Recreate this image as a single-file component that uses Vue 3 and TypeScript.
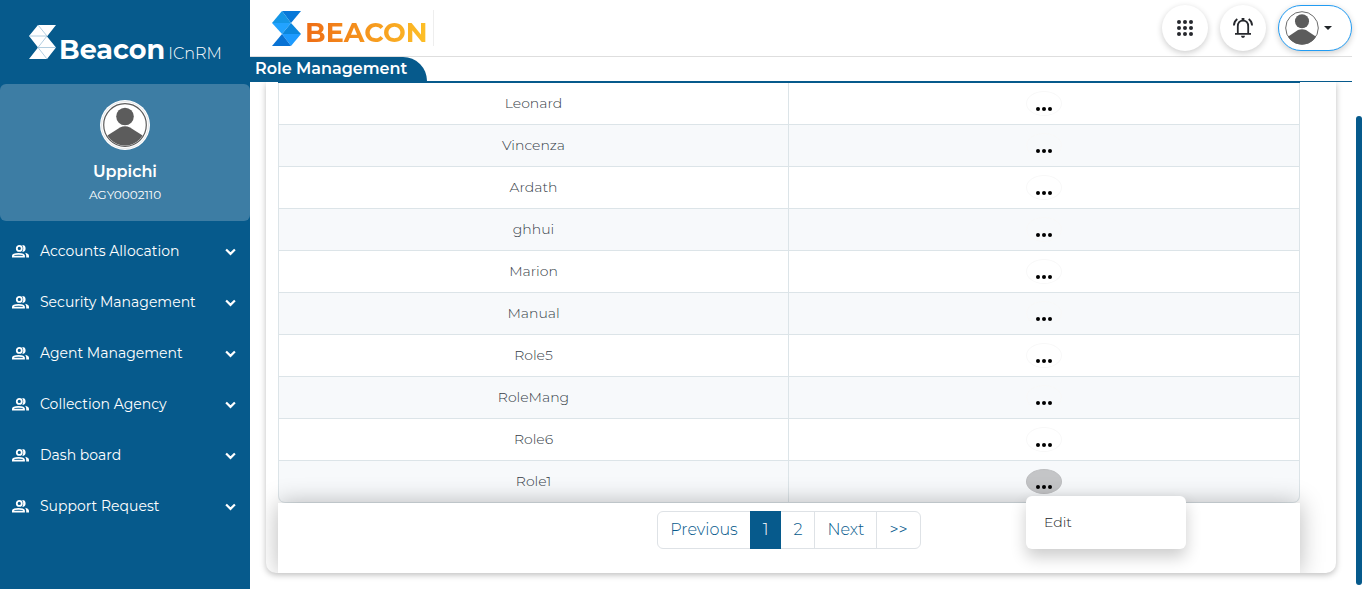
<script setup lang="ts">
import { ref } from 'vue'

const menuItems: string[] = [
  'Accounts Allocation',
  'Security Management',
  'Agent Management',
  'Collection Agency',
  'Dash board',
  'Support Request',
]

const roles: string[] = [
  'Leonard',
  'Vincenza',
  'Ardath',
  'ghhui',
  'Marion',
  'Manual',
  'Role5',
  'RoleMang',
  'Role6',
  'Role1',
]

const pages: string[] = ['Previous', '1', '2', 'Next', '>>']
const currentPage = ref('1')
const openRole = ref<string | null>('Role1')

function toggle(role: string): void {
  openRole.value = openRole.value === role ? null : role
}

function goTo(page: string): void {
  if (page === '1' || page === '2') currentPage.value = page
  else currentPage.value = page === 'Previous' ? '1' : '2'
}
</script>

<template>
  <div class="shell">
    <aside class="sidebar">
      <div class="brand">
        <svg class="brand-mark" viewBox="0 0 27 34" aria-hidden="true">
          <path d="M9 0H27L18 11.500L27 22.500L18 34H0L9 22.500L0 11Z" fill="#fff" />
          <path d="M0 11H18L9 0M18 11L9 22.500H27M9 22.500L18 34" fill="none" stroke="#9fc2d8" stroke-width=".8" />
        </svg>
        <span class="brand-name">Beacon</span>
        <span class="brand-suffix">ICnRM</span>
      </div>

      <section class="profile">
        <svg class="profile-photo" viewBox="0 0 50 50" aria-hidden="true">
          <defs>
            <clipPath id="profile-clip"><circle cx="25" cy="25" r="20.500" /></clipPath>
          </defs>
          <circle cx="25" cy="25" r="25" fill="#fff" />
          <circle cx="25" cy="25" r="23.500" fill="none" stroke="#d9dde0" stroke-width=".7" />
          <circle cx="25" cy="25" r="21.300" fill="#fff" stroke="#5c5c5c" stroke-width="1.200" />
          <g clip-path="url(#profile-clip)" fill="#5c5c5c">
            <circle cx="25" cy="16.500" r="8.800" />
            <path d="M5 37L20 27.500Q25 25 30 27.500L45 37V50H5Z" />
          </g>
        </svg>
        <strong class="profile-name">Uppichi</strong>
        <span class="profile-code">AGY0002110</span>
      </section>

      <nav class="menu" aria-label="Main">
        <button v-for="item in menuItems" :key="item" class="menu-item" type="button">
          <svg class="people" viewBox="0 0 17 13" aria-hidden="true">
            <circle cx="7.300" cy="3.400" r="2.500" fill="none" stroke="#fff" stroke-width="1.800" />
            <path d="M.9 11.600V10.800Q1 8.800 6.500 8.800T12 10.800V11.600Z" fill="none" stroke="#fff" stroke-width="1.800" />
            <path d="M10.200 0A3.400 3.400 0 1 1 10.200 6.800Q12.300 3.500 10.200 0ZM13 7.800Q17 8.600 17 11V12.500H14.200V10.800Q14.200 9 13 7.800Z" fill="#fff" />
          </svg>
          <span class="menu-label">{{ item }}</span>
          <svg class="chevron" viewBox="0 0 10 7" aria-hidden="true">
            <path d="M1 1.200L5 5.200L9 1.200" fill="none" stroke="#fff" stroke-width="2" />
          </svg>
        </button>
      </nav>
    </aside>

    <main class="main">
      <header class="topbar">
        <div class="logo">
          <svg class="logo-mark" viewBox="0 0 29 35" aria-hidden="true">
            <path d="M10 0H29L19 12Z" fill="#0878d8" />
            <path d="M10 0L19 12H0Z" fill="#1496e6" />
            <path d="M0 12H19L10 23Z" fill="#22a3ff" />
            <path d="M19 12L29 23H10Z" fill="#0b87dd" />
            <path d="M10 23H29L19 35Z" fill="#1d9bff" />
            <path d="M10 23L19 35H0Z" fill="#0872d4" />
          </svg>
          <span class="logo-name">BEACON</span>
        </div>
        <div class="actions">
          <button class="round" type="button" aria-label="Applications">
            <svg class="apps" viewBox="0 0 16 16" aria-hidden="true">
              <g fill="#26282d">
                <template v-for="r in 3" :key="r">
                  <circle v-for="c in 3" :key="c" :cx="c * 6 - 4" :cy="r * 6 - 4" r="2" />
                </template>
              </g>
            </svg>
          </button>
          <button class="round" type="button" aria-label="Notifications">
            <svg class="bell" viewBox="0 0 20 20" aria-hidden="true">
              <g fill="none" stroke="#26282d" stroke-width="1.800">
                <path d="M4.800 15.600V8.500Q4.800 2.700 10 2.700T15.200 8.500V15.600M2 15.800H18" />
                <path d="M4.300 1Q1 3.400 .9 7.400M15.700 1Q19 3.400 19.100 7.400" />
              </g>
              <path d="M8.600 0H11.400V3H8.600ZM8 17.800H12Q12 19.900 10 19.900T8 17.800Z" fill="#26282d" />
            </svg>
          </button>
          <button class="account" type="button" aria-label="Account">
            <svg class="account-photo" viewBox="0 0 34 34" aria-hidden="true">
              <defs>
                <clipPath id="account-clip"><circle cx="17" cy="17" r="16.500" /></clipPath>
              </defs>
              <circle cx="17" cy="17" r="16.300" fill="#fff" stroke="#6b6b6b" />
              <g clip-path="url(#account-clip)" fill="#5c5c5c">
                <circle cx="17" cy="10.300" r="7" />
                <path d="M1 27L13 19Q17 17.500 21 19L33 27V34H1Z" />
              </g>
            </svg>
            <svg class="caret" viewBox="0 0 8 4" aria-hidden="true"><path d="M0 0H8L4 4Z" fill="#212529" /></svg>
          </button>
        </div>
      </header>

      <div class="titlebar"><h1 class="title">Role Management</h1></div>

      <div class="content">
        <div class="card">
          <table class="roles">
            <tbody>
              <tr v-for="role in roles" :key="role">
                <td class="role-name">{{ role }}</td>
                <td>
                  <div class="cell-action">
                    <button
                      class="more"
                      :class="{ open: openRole === role }"
                      type="button"
                      :aria-label="`Actions for ${role}`"
                      @click="toggle(role)"
                    >
                      <svg class="dots" viewBox="0 0 16 4" aria-hidden="true">
                        <circle cx="2" cy="2" r="2" /><circle cx="8" cy="2" r="2" /><circle cx="14" cy="2" r="2" />
                      </svg>
                    </button>
                    <div v-if="openRole === role" class="dropdown">
                      <a class="dropdown-item" href="#">Edit</a>
                    </div>
                  </div>
                </td>
              </tr>
            </tbody>
          </table>
          <div class="pager">
            <nav class="pages" aria-label="Pages">
              <button
                v-for="page in pages"
                :key="page"
                class="page"
                :class="{ active: page === currentPage }"
                type="button"
                @click="goTo(page)"
              >{{ page }}</button>
            </nav>
          </div>
        </div>
      </div>
    </main>
    <div class="scroll-track"><div class="scroll-thumb"></div></div>
  </div>
</template>

<style>
body {
  margin: 0;
  background: #fff;
}
</style>

<style scoped>
.shell {
  display: flex;
  min-height: 100vh;
  font-family: Montserrat, Inter, "Open Sans", sans-serif;
  background: #fff;
}
.shell * {
  box-sizing: border-box;
}
button {
  font: inherit;
  border: 0;
  padding: 0;
  background: none;
  cursor: pointer;
}
svg {
  display: block;
  flex: none;
}

.sidebar {
  flex: none;
  width: 250px;
  background: #065a8c;
  color: #fff;
}
.brand {
  display: flex;
  align-items: baseline;
  height: 84px;
  padding: 25px 0 0 29px;
}
.brand-mark {
  width: 27px;
  height: 34px;
}
.brand-name {
  margin-left: 3px;
  font-size: 27px;
  line-height: 34px;
  font-weight: 700;
}
.brand-suffix {
  margin-left: 3px;
  font-size: 16px;
  font-weight: 300;
}
.profile {
  display: flex;
  flex-direction: column;
  align-items: center;
  height: 137px;
  padding-top: 16px;
  border-radius: 6px;
  background: #3d7da4;
}
.profile-photo {
  width: 50px;
  height: 50px;
}
.profile-name {
  margin-top: 10px;
  font-size: 16px;
  line-height: 24px;
  font-weight: 600;
}
.profile-code {
  margin-top: 3px;
  font-size: 12px;
  line-height: 16px;
  font-weight: 400;
}
.menu {
  padding-top: 5px;
}
.menu-item {
  display: flex;
  align-items: center;
  width: 100%;
  height: 51px;
  padding: 0 14px 0 12px;
  color: #fff;
  text-align: left;
}
.people {
  width: 17px;
  height: 13px;
}
.menu-label {
  flex: 1;
  margin-left: 11px;
  padding-bottom: 1px;
  font-size: 14px;
  line-height: 20px;
}
.chevron {
  width: 11px;
  height: 8px;
}

.main {
  display: flex;
  flex-direction: column;
  flex: 1;
  min-width: 0;
}
.topbar {
  display: flex;
  justify-content: space-between;
  align-items: center;
  height: 57px;
  padding-left: 22px;
  border-bottom: 1px solid #dedede;
}
.logo {
  display: flex;
  align-items: center;
  height: 36px;
  padding-right: 5px;
  border-right: 1px solid #eee;
}
.logo-mark {
  width: 29px;
  height: 35px;
}
.logo-name {
  margin: 10px 0 0 4px;
  font-size: 27px;
  line-height: 30px;
  font-weight: 700;
  color: transparent;
  background: linear-gradient(90deg, #ee6c15, #fdc027);
  background-clip: text;
}
.actions {
  display: flex;
  gap: 12px;
}
.round,
.account {
  display: flex;
  align-items: center;
  justify-content: center;
  width: 46px;
  height: 46px;
  border-radius: 23px;
  background: #fff;
  box-shadow: 0 2px 6px rgba(0, 0, 0, 0.2);
}
.apps {
  width: 16px;
  height: 16px;
}
.bell {
  width: 20px;
  height: 20px;
}
.account {
  justify-content: flex-start;
  gap: 5px;
  width: 74px;
  padding-left: 6px;
  border: 1px solid #229cf3;
}
.account-photo {
  width: 34px;
  height: 34px;
}
.caret {
  width: 8px;
  height: 4px;
}

.titlebar {
  display: flex;
  height: 25px;
  border-bottom: 1px solid #065a8c;
}
.title {
  margin: 0;
  padding: 0 20px 0 5px;
  border-top-right-radius: 24px;
  background: #065a8c;
  color: #fff;
  font-size: 16px;
  line-height: 23px;
  font-weight: 600;
}

.content {
  flex: 1;
  padding: 0 16px 16px;
  overflow: hidden;
}
.card {
  padding: 0 36px 0 12px;
  border-radius: 0 0 10px 10px;
  overflow: hidden;
  box-shadow: 0 2px 6px rgba(0, 0, 0, 0.26);
}
.roles {
  width: 100%;
  table-layout: fixed;
  border-collapse: separate;
  border-spacing: 0;
  border-top: 1px solid #065a8c;
  color: #343c46;
  font-size: 14px;
  font-weight: 300;
  line-height: 20px;
}
.roles td {
  height: 42px;
  padding: 0;
  border-right: 1px solid #dce4e8;
  border-bottom: 1px solid #dce4e8;
  text-align: center;
}
.roles .role-name {
  padding-bottom: 2px;
  border-left: 1px solid #dce4e8;
}
.roles tr:nth-child(even) td {
  background: #f7f9fb;
}
.roles tr:last-child td:first-child {
  border-bottom-left-radius: 7px;
}
.roles tr:last-child td:last-child {
  border-bottom-right-radius: 7px;
}
.cell-action {
  position: relative;
  width: 36px;
  margin: 0 auto;
}
.more {
  display: flex;
  justify-content: center;
  width: 36px;
  height: 25px;
  padding-top: 15px;
  border: 1px solid #f8f8f8;
  border-radius: 50%;
}
.more.open {
  border-color: #bdbec0;
  background: #c4c5c7;
}
.dots {
  width: 16px;
  height: 4px;
}
.dropdown {
  position: absolute;
  z-index: 2;
  top: 27px;
  left: 0;
  width: 160px;
  padding: 8px 0;
  border-radius: 6px;
  background: #fff;
  box-shadow: 0 8px 16px rgba(0, 0, 0, 0.2);
  text-align: left;
}
.dropdown-item {
  display: block;
  padding: 8px 18px 9px;
  color: #212529;
  line-height: 20px;
  text-decoration: none;
}
.pager {
  position: relative;
  z-index: 1;
  display: flex;
  justify-content: center;
  align-items: flex-start;
  height: 70px;
  padding-top: 8px;
  background: #fff;
  box-shadow: 0 0 24px rgba(0, 0, 0, 0.28);
}
.pages {
  display: flex;
}
.page {
  padding: 6px 12px;
  border: 1px solid #dee2e6;
  color: #065a8c;
  font-size: 16px;
  font-weight: 300;
  line-height: 24px;
}
.page + .page {
  margin-left: -1px;
}
.page:first-child {
  border-radius: 6px 0 0 6px;
}
.page:last-child {
  border-radius: 0 6px 6px 0;
}
.page.active {
  z-index: 1;
  border-color: #065a8c;
  background: #065a8c;
  color: #fff;
}

.scroll-track {
  display: flex;
  flex: none;
  width: 14px;
  padding: 116px 4px 4px;
}
.scroll-thumb {
  flex: 1;
  border-radius: 3px;
  background: #065a8c;
}
</style>
